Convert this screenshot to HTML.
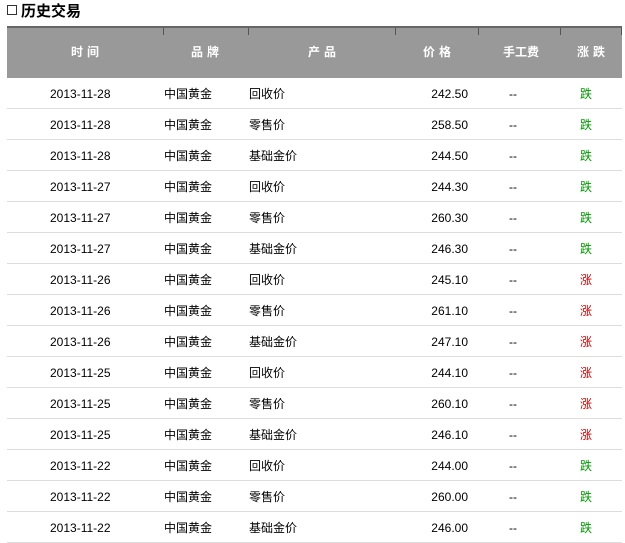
<!DOCTYPE html>
<html><head><meta charset="utf-8"><style>
body{margin:0;width:625px;height:543px;background:#fff;position:relative;overflow:hidden;font-family:"Liberation Sans","Noto Sans CJK SC","WenQuanYi Zen Hei",sans-serif;font-size:12px;color:#000}
.t{position:absolute;left:7px;top:2px;font-size:15px;font-weight:bold;line-height:20px}
.t span{display:inline-block;width:8px;height:8px;border:1px solid #333;margin-right:4px;vertical-align:1px}
.hd{position:absolute;left:7px;top:26px;width:615px;height:52px;background:#999;border-top:2px solid #666;box-sizing:border-box}
.sep{position:absolute;top:0;width:1px;height:7px;background:#555}
.h{position:absolute;top:15px;color:#fff;font-weight:bold;letter-spacing:4px;transform:translateX(-50%);white-space:nowrap}
.r{position:absolute;left:7px;width:615px;height:31px;border-bottom:1px solid #ddd;box-sizing:border-box}
.c{position:absolute;top:9px;white-space:nowrap;line-height:14px}
.g{color:#090}.red{color:#c00}
</style></head><body>
<div class="t"><span></span>历史交易</div>
<div class="hd">
<div class="sep" style="left:156px"></div><div class="sep" style="left:241px"></div><div class="sep" style="left:388px"></div><div class="sep" style="left:471px"></div><div class="sep" style="left:553px"></div><div class="sep" style="left:614px"></div>
<div class="h" style="left:80px">时间</div><div class="h" style="left:200px">品牌</div><div class="h" style="left:317px">产品</div><div class="h" style="left:432px">价格</div><div class="h" style="left:514px;letter-spacing:0">手工费</div><div class="h" style="left:586px">涨跌</div>
</div>
<div id="rows"></div>
<script>
var d=[["2013-11-28","回收价","242.50",0],["2013-11-28","零售价","258.50",0],["2013-11-28","基础金价","244.50",0],["2013-11-27","回收价","244.30",0],["2013-11-27","零售价","260.30",0],["2013-11-27","基础金价","246.30",0],["2013-11-26","回收价","245.10",1],["2013-11-26","零售价","261.10",1],["2013-11-26","基础金价","247.10",1],["2013-11-25","回收价","244.10",1],["2013-11-25","零售价","260.10",1],["2013-11-25","基础金价","246.10",1],["2013-11-22","回收价","244.00",0],["2013-11-22","零售价","260.00",0],["2013-11-22","基础金价","246.00",0]];
var h="";d.forEach(function(r,i){h+='<div class="r" style="top:'+(78+31*i)+'px"><div class="c" style="left:43px">'+r[0]+'</div><div class="c" style="left:157px">中国黄金</div><div class="c" style="left:242px">'+r[1]+'</div><div class="c" style="right:154px">'+r[2]+'</div><div class="c" style="left:502px">--</div><div class="c '+(r[3]?'red':'g')+'" style="left:573px">'+(r[3]?'涨':'跌')+'</div></div>'});
document.getElementById("rows").innerHTML=h;
</script>
</body></html>
